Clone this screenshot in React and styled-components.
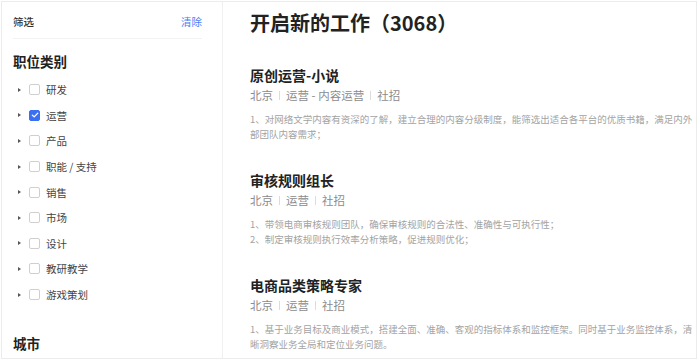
import React from "react";
import styled, { createGlobalStyle } from "styled-components";

const GlobalStyle = createGlobalStyle`
  html, body {
    margin: 0;
    padding: 0;
    background: #fff;
  }
  body {
    font-family: "Noto Sans CJK SC", "Noto Sans", sans-serif;
  }
  * {
    box-sizing: border-box;
  }
`;

const categories = [
  { name: "研发", checked: false },
  { name: "运营", checked: true },
  { name: "产品", checked: false },
  { name: "职能 / 支持", checked: false },
  { name: "销售", checked: false },
  { name: "市场", checked: false },
  { name: "设计", checked: false },
  { name: "教研教学", checked: false },
  { name: "游戏策划", checked: false },
];

const jobs = [
  {
    title: "原创运营-小说",
    tags: ["北京", "运营 - 内容运营", "社招"],
    desc: [
      "1、对网络文学内容有资深的了解，建立合理的内容分级制度，能筛选出适合各平台的优质书籍，满足内外部团队内容需求；",
    ],
  },
  {
    title: "审核规则组长",
    tags: ["北京", "运营", "社招"],
    desc: [
      "1、带领电商审核规则团队，确保审核规则的合法性、准确性与可执行性；",
      "2、制定审核规则执行效率分析策略，促进规则优化；",
    ],
  },
  {
    title: "电商品类策略专家",
    tags: ["北京", "运营", "社招"],
    desc: [
      "1、基于业务目标及商业模式，搭建全面、准确、客观的指标体系和监控框架。同时基于业务监控体系，清晰洞察业务全局和定位业务问题。",
    ],
  },
];

const App = () => {
  return (
    <>
      <GlobalStyle />
      <Frame>
        <Sidebar>
          <FilterHeader>
            <FilterLabel>筛选</FilterLabel>
            <ClearLink>清除</ClearLink>
          </FilterHeader>
          <SectionTitle>职位类别</SectionTitle>
          <CategoryList>
            {categories.map((c) => (
              <CategoryRow key={c.name}>
                <Caret />
                <Checkbox checked={c.checked}>
                  {c.checked && (
                    <svg width="8" height="8" viewBox="0 0 8 8">
                      <path
                        d="M1.3 4.1 L3.2 5.9 L6.8 2.1"
                        fill="none"
                        stroke="#fff"
                        strokeWidth="1.3"
                        strokeLinecap="round"
                        strokeLinejoin="round"
                      />
                    </svg>
                  )}
                </Checkbox>
                <CategoryName>{c.name}</CategoryName>
              </CategoryRow>
            ))}
          </CategoryList>
          <CityTitle>城市</CityTitle>
        </Sidebar>
        <Main>
          <PageTitle>开启新的工作（3068）</PageTitle>
          <JobList>
            {jobs.map((job) => (
              <Job key={job.title}>
                <JobTitle>{job.title}</JobTitle>
                <Tags>
                  {job.tags.map((t, i) => (
                    <React.Fragment key={t}>
                      {i > 0 && <TagDivider />}
                      <span>{t}</span>
                    </React.Fragment>
                  ))}
                </Tags>
                <Desc>
                  {job.desc.map((d) => (
                    <DescLine key={d}>{d}</DescLine>
                  ))}
                </Desc>
              </Job>
            ))}
          </JobList>
        </Main>
      </Frame>
    </>
  );
};

export default App;

const Frame = styled.div`
  margin: 1px 3px 2px 1px;
  height: 358px;
  border: 1px solid #ececec;
  display: flex;
  overflow: hidden;
`;

const Sidebar = styled.aside`
  width: 221px;
  flex-shrink: 0;
  border-right: 1px solid #f0f0f0;
  padding: 0 20px 0 11px;
  color: #333;
`;

const FilterHeader = styled.div`
  height: 37px;
  display: flex;
  align-items: center;
  justify-content: space-between;
  border-bottom: 1px solid #f2f2f2;
  padding-top: 3px;
`;

const FilterLabel = styled.span`
  font-size: 10.5px;
  font-weight: 500;
  color: #333;
`;

const ClearLink = styled.span`
  font-size: 10.5px;
  color: #4d7cf6;
  cursor: pointer;
`;

const SectionTitle = styled.div`
  font-size: 13.5px;
  font-weight: 700;
  color: #222;
  line-height: 20px;
  margin-top: 12px;
`;

const CategoryList = styled.ul`
  list-style: none;
  margin: 6px 0 0;
  padding: 0 0 0 5px;
`;

const CategoryRow = styled.li`
  height: 25.6px;
  display: flex;
  align-items: center;
`;

const Caret = styled.span`
  width: 0;
  height: 0;
  border-top: 2.5px solid transparent;
  border-bottom: 2.5px solid transparent;
  border-left: 3px solid #555;
  margin-right: 8px;
`;

const Checkbox = styled.span`
  width: 11px;
  height: 11px;
  border-radius: 2px;
  border: 1px solid ${(p) => (p.checked ? "#3a6ff2" : "#cfcfcf")};
  background: ${(p) => (p.checked ? "#3a6ff2" : "#fff")};
  display: flex;
  align-items: center;
  justify-content: center;
  margin-right: 6px;
`;

const CategoryName = styled.span`
  font-size: 10.5px;
  color: #444;
`;

const CityTitle = styled.div`
  font-size: 13.5px;
  font-weight: 700;
  color: #222;
  line-height: 20px;
  margin-top: 26px;
`;

const Main = styled.main`
  flex: 1;
  padding: 7px 0 0 27px;
  min-width: 0;
`;

const PageTitle = styled.h1`
  margin: 0;
  font-size: 20px;
  line-height: 28px;
  font-weight: 700;
  color: #222;
`;

const JobList = styled.div`
  margin-top: 28px;
  display: flex;
  flex-direction: column;
  gap: 28px;
`;

const Job = styled.div`
  display: flex;
  flex-direction: column;
`;

const JobTitle = styled.div`
  font-size: 14px;
  line-height: 20px;
  font-weight: 700;
  color: #222;
`;

const Tags = styled.div`
  margin-top: 1px;
  height: 18px;
  display: flex;
  align-items: center;
  font-size: 11.5px;
  color: #8c8c8c;
`;

const TagDivider = styled.span`
  width: 1px;
  height: 9px;
  background: #dcdcdc;
  margin: 0 6px;
`;

const Desc = styled.div`
  margin-top: 8px;
  width: 444px;
  font-size: 9.5px;
  line-height: 15px;
  color: #a3a3a3;
`;

const DescLine = styled.div``;
